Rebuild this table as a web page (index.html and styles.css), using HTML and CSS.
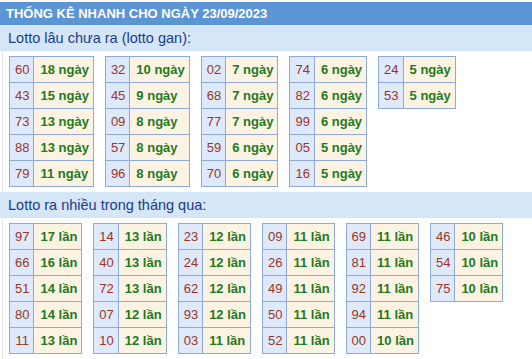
FILE: index.html
```html
<!DOCTYPE html>
<html lang="vi">
<head>
<meta charset="utf-8">
<link rel="stylesheet" href="styles.css">
</head>
<body>
<div class="box">
  <div class="head">THỐNG KÊ NHANH CHO NGÀY 23/09/2023</div>
  <div class="title">Lotto lâu chưa ra (lotto gan):</div>
  <div class="group">
    <table class="t"><tr><td class="n">60</td><td class="v">18 ngày</td></tr><tr><td class="n">43</td><td class="v">15 ngày</td></tr><tr><td class="n">73</td><td class="v">13 ngày</td></tr><tr><td class="n">88</td><td class="v">13 ngày</td></tr><tr><td class="n">79</td><td class="v">11 ngày</td></tr></table>
    <table class="t"><tr><td class="n">32</td><td class="v">10 ngày</td></tr><tr><td class="n">45</td><td class="v">9 ngày</td></tr><tr><td class="n">09</td><td class="v">8 ngày</td></tr><tr><td class="n">57</td><td class="v">8 ngày</td></tr><tr><td class="n">96</td><td class="v">8 ngày</td></tr></table>
    <table class="t"><tr><td class="n">02</td><td class="v">7 ngày</td></tr><tr><td class="n">68</td><td class="v">7 ngày</td></tr><tr><td class="n">77</td><td class="v">7 ngày</td></tr><tr><td class="n">59</td><td class="v">6 ngày</td></tr><tr><td class="n">70</td><td class="v">6 ngày</td></tr></table>
    <table class="t"><tr><td class="n">74</td><td class="v">6 ngày</td></tr><tr><td class="n">82</td><td class="v">6 ngày</td></tr><tr><td class="n">99</td><td class="v">6 ngày</td></tr><tr><td class="n">05</td><td class="v">5 ngày</td></tr><tr><td class="n">16</td><td class="v">5 ngày</td></tr></table>
    <table class="t"><tr><td class="n">24</td><td class="v">5 ngày</td></tr><tr><td class="n">53</td><td class="v">5 ngày</td></tr></table>
  </div>
  <div class="title">Lotto ra nhiều trong tháng qua:</div>
  <div class="group">
    <table class="t"><tr><td class="n">97</td><td class="v">17 lần</td></tr><tr><td class="n">66</td><td class="v">16 lần</td></tr><tr><td class="n">51</td><td class="v">14 lần</td></tr><tr><td class="n">80</td><td class="v">14 lần</td></tr><tr><td class="n">11</td><td class="v">13 lần</td></tr></table>
    <table class="t"><tr><td class="n">14</td><td class="v">13 lần</td></tr><tr><td class="n">40</td><td class="v">13 lần</td></tr><tr><td class="n">72</td><td class="v">13 lần</td></tr><tr><td class="n">07</td><td class="v">12 lần</td></tr><tr><td class="n">10</td><td class="v">12 lần</td></tr></table>
    <table class="t"><tr><td class="n">23</td><td class="v">12 lần</td></tr><tr><td class="n">24</td><td class="v">12 lần</td></tr><tr><td class="n">62</td><td class="v">12 lần</td></tr><tr><td class="n">93</td><td class="v">12 lần</td></tr><tr><td class="n">03</td><td class="v">11 lần</td></tr></table>
    <table class="t"><tr><td class="n">09</td><td class="v">11 lần</td></tr><tr><td class="n">26</td><td class="v">11 lần</td></tr><tr><td class="n">49</td><td class="v">11 lần</td></tr><tr><td class="n">50</td><td class="v">11 lần</td></tr><tr><td class="n">52</td><td class="v">11 lần</td></tr></table>
    <table class="t"><tr><td class="n">69</td><td class="v">11 lần</td></tr><tr><td class="n">81</td><td class="v">11 lần</td></tr><tr><td class="n">92</td><td class="v">11 lần</td></tr><tr><td class="n">94</td><td class="v">11 lần</td></tr><tr><td class="n">00</td><td class="v">10 lần</td></tr></table>
    <table class="t"><tr><td class="n">46</td><td class="v">10 lần</td></tr><tr><td class="n">54</td><td class="v">10 lần</td></tr><tr><td class="n">75</td><td class="v">10 lần</td></tr></table>
  </div>
</div>
</body>
</html>
```

FILE: styles.css
```css
html, body {
  margin: 0;
  padding: 0;
  background: #ffffff;
}
body {
  font-family: "Liberation Sans", Arial, sans-serif;
  font-size: 13px;
}
.box {
  padding-top: 2px;
}
.head {
  height: 23px;
  line-height: 23px;
  background: #5b95d5;
  color: #ffffff;
  font-weight: bold;
  font-size: 13px;
  padding-left: 6px;
}
.title {
  height: 26px;
  line-height: 26px;
  background: #d5e6f8;
  color: #1b3c8a;
  font-size: 14.5px;
  padding-left: 8px;
}
.group {
  display: flex;
  align-items: flex-start;
  gap: 11px;
  margin-left: 2px;
  border-left: 1px solid #e4e4e4;
  padding: 5px 0 5px 6px;
}
.t {
  border-collapse: collapse;
}
.t td {
  border: 1px solid #8fa9dc;
  line-height: 25px;
  font-size: 13px;
}
.n {
  background: #deeafb;
  color: #9c3424;
  text-align: center;
  padding: 0 4px 0 5px;
}
.v {
  background: #fdf3e2;
  color: #1f7a1f;
  font-weight: bold;
  padding: 0 4px 0 6px;
}
```
